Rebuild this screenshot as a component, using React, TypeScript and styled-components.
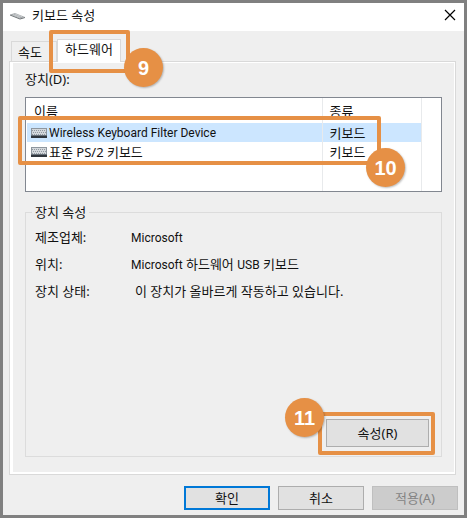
import React, { useState } from "react";
import styled, { createGlobalStyle, css } from "styled-components";

const ACCENT = "#e69045";

const GlobalStyle = createGlobalStyle`
  * { box-sizing: border-box; }
  body {
    margin: 0;
    color: #111;
    background: #efefef;
    font-family: "Noto Sans", "Noto Sans CJK KR", sans-serif;
    font-size: 13px;
    line-height: 18px;
  }
  button { font: inherit; color: inherit; }
`;

const Dialog = styled.main`
  display: flex;
  flex-direction: column;
  min-height: 100vh;
  border: 3px solid #808080;
  background: #efefef;
`;

const TitleBar = styled.header`
  display: flex;
  align-items: center;
  gap: 6px;
  height: 28px;
  padding: 0 8px 4px 7px;
  background: #fff;
`;

const Title = styled.h1`
  flex: 1;
  margin: 0;
  font-size: 13px;
  font-weight: 400;
`;

const CloseButton = styled.button`
  display: flex;
  padding: 0;
  border: 0;
  background: none;
`;

const TabBar = styled.div`
  display: flex;
  align-items: flex-end;
  margin-top: 8px;
  padding: 0 8px;
`;

const Anchor = styled.div`
  position: relative;
  display: flex;
`;

const Tab = styled.button<{ $active?: boolean }>`
  width: ${(p) => (p.$active ? 64 : 46)}px;
  height: ${(p) => (p.$active ? 23 : 20)}px;
  margin-bottom: ${(p) => (p.$active ? -1 : 0)}px;
  padding: 0 8px 0 6px;
  border: 1px solid #d9d9d9;
  border-bottom: 0;
  background: ${(p) => (p.$active ? "#fff" : "#efefef")};
  text-align: left;
  white-space: nowrap;
  ${(p) =>
    p.$active &&
    css`
      position: relative;
      padding: 0 0 4px 7px;
    `}
`;

const Panel = styled.section`
  display: flex;
  flex: 1;
  flex-direction: column;
  margin: 0 8px 0 6px;
  padding: 8px 13px 16px 12px;
  border: 1px solid #d9d9d9;
  box-shadow: inset 3px 0 #fff, inset -1px 0 #fff, inset 0 1px #fff, inset 0 -2px #fff;
`;

const ListLabel = styled.span`
  padding-bottom: 9px;
  margin-left: 3px;
`;

const ListBox = styled.div`
  position: relative;
  margin-left: 3px;
  padding-left: 1px;
  border: 1px solid #828790;
  background: #fff;
`;

const DeviceTable = styled.table`
  width: 100%;
  border-collapse: collapse;
  table-layout: fixed;
`;

const NameCol = styled.col``;
const KindCol = styled.col`
  width: 99px;
`;
const RestCol = styled.col`
  width: 20px;
`;

const HeadCell = styled.th`
  height: 25px;
  padding: 0 7px;
  font-weight: 400;
  text-align: left;
  & + & { border-left: 1px solid #e8eaec; }
`;

const Row = styled.tr<{ $selected?: boolean }>`
  td:not(:last-child) {
    background: ${(p) => (p.$selected ? "#cce6ff" : "transparent")};
  }
`;

const Cell = styled.td`
  height: 19px;
  padding: 0 7px;
  line-height: 18px;
  & + & { border-left: 1px solid #e8eaec; }
`;

const FillCell = styled(Cell)`
  height: 30px;
`;

const Device = styled.span`
  display: flex;
  align-items: center;
  gap: 2px;
  margin-left: -3px;
  white-space: nowrap;
`;

const Latin = styled.span`
  font-family: Roboto, sans-serif;
  font-size: 12px;
`;

const Group = styled.fieldset`
  min-width: 0;
  margin: 11px 0 0 3px;
  padding: 7px 12px 9px 9px;
  border: 1px solid #dcdcdc;
`;

const Legend = styled.legend`
  margin-left: -3px;
  padding: 0 3px;
`;

const Details = styled.dl`
  display: grid;
  grid-template-columns: 96px 1fr;
  row-gap: 8px;
  align-content: start;
  min-height: 191px;
  margin: 0;
`;

const Term = styled.dt``;

const Value = styled.dd<{ $indent?: boolean }>`
  margin: 0;
  padding-left: ${(p) => (p.$indent ? 4 : 0)}px;
`;

const GroupActions = styled.div`
  display: flex;
  justify-content: flex-end;
`;

const PushButton = styled.button<{ $primary?: boolean; $size?: "large" }>`
  width: ${(p) => (p.$size === "large" ? 103 : 86)}px;
  height: ${(p) => (p.$size === "large" ? 28 : 24)}px;
  padding: 0;
  border: ${(p) => (p.$primary ? "2px solid #0078d7" : "1px solid #adadad")};
  background: #e1e1e1;
  line-height: 18px;
  &:disabled {
    border-color: #bfbfbf;
    background: #ccc;
    color: #838383;
  }
`;

const Footer = styled.footer`
  display: flex;
  justify-content: flex-end;
  gap: 8px;
  padding: 11px 6px 5px;
`;

const Highlight = styled.div<{ $inset: string }>`
  position: absolute;
  z-index: 2;
  inset: ${(p) => p.$inset};
  border: 4px solid ${ACCENT};
  border-radius: 2px;
  pointer-events: none;
`;

const Badge = styled.span<{ $at: "tab" | "list" | "button" }>`
  position: absolute;
  display: grid;
  place-items: center;
  width: 39px;
  height: 39px;
  border-radius: 50%;
  background: ${ACCENT};
  box-shadow: 1px 1px 2px rgba(0, 0, 0, 0.25);
  color: #fff;
  font: 700 20px/20px "Liberation Sans", Arial, sans-serif;
  ${(p) => p.$at === "tab" && "right: -37px; bottom: -18px;"}
  ${(p) => p.$at === "list" && "right: -28px; bottom: -26px;"}
  ${(p) => p.$at === "button" && "left: -37px; top: -18px;"}
`;

const TitleIcon = () => (
  <svg width="16" height="10" viewBox="0 0 16 10" aria-hidden="true">
    <path d="M0 4.500 5 3 15 7 10 8.500Z" fill="#a9adb0" />
    <path d="m0 4.500 10 4L15 7v1l-5 1.500L0 5.500Z" fill="#6d7275" />
    <path d="m3 4.700 7 2.700M5 4l7 2.700" stroke="#d5d8da" strokeWidth=".7" />
  </svg>
);

const CloseIcon = () => (
  <svg width="12" height="12" viewBox="0 0 12 12" aria-hidden="true">
    <path d="m1 1 10 10M11 1 1 11" stroke="#000" strokeWidth="1.2" />
  </svg>
);

const KeyboardIcon = () => (
  <svg width="16" height="10" viewBox="0 0 16 10" aria-hidden="true">
    <path d="M0 0h16v10H0Z" fill="#8e969e" />
    <path d="M1 1h14v6H1Z" fill="#d4d8dc" />
    <path
      d="M1 2.500h14M2 4.500h13M1 6.500h14"
      stroke="#9299a1"
      strokeWidth="1"
      strokeDasharray="1 1"
    />
    <path d="M0 8h16v2H0Z" fill="#30363d" />
    <path d="M0 7h16v1H0Z" fill="#68717a" />
  </svg>
);

const devices = [
  { id: "wireless", name: <Latin>Wireless Keyboard Filter Device</Latin>, kind: "키보드" },
  { id: "ps2", name: "표준 PS/2 키보드", kind: "키보드" },
];

export default function App() {
  const [selected, setSelected] = useState("wireless");
  return (
    <>
      <GlobalStyle />
      <Dialog>
        <TitleBar>
          <TitleIcon />
          <Title>키보드 속성</Title>
          <CloseButton aria-label="닫기">
            <CloseIcon />
          </CloseButton>
        </TitleBar>

        <TabBar role="tablist">
          <Tab role="tab" aria-selected={false}>속도</Tab>
          <Anchor>
            <Tab role="tab" aria-selected $active>하드웨어</Tab>
            <Highlight $inset="-9px -9px -12px -8px">
              <Badge $at="tab">9</Badge>
            </Highlight>
          </Anchor>
        </TabBar>

        <Panel role="tabpanel">
          <ListLabel id="devices-label">장치(D):</ListLabel>
          <ListBox>
            <DeviceTable aria-labelledby="devices-label">
              <colgroup>
                <NameCol />
                <KindCol />
                <RestCol />
              </colgroup>
              <thead>
                <tr>
                  <HeadCell scope="col">이름</HeadCell>
                  <HeadCell scope="col">종류</HeadCell>
                  <HeadCell />
                </tr>
              </thead>
              <tbody>
                {devices.map((d) => (
                  <Row key={d.id} $selected={d.id === selected} onClick={() => setSelected(d.id)}>
                    <Cell>
                      <Device>
                        <KeyboardIcon />
                        {d.name}
                      </Device>
                    </Cell>
                    <Cell>{d.kind}</Cell>
                    <Cell />
                  </Row>
                ))}
                <tr>
                  <FillCell />
                  <FillCell />
                  <FillCell />
                </tr>
              </tbody>
            </DeviceTable>
            <Highlight $inset="18px 60px 26px -8px">
              <Badge $at="list">10</Badge>
            </Highlight>
          </ListBox>

          <Group>
            <Legend>장치 속성</Legend>
            <Details>
              <Term>제조업체:</Term>
              <Value>
                <Latin>Microsoft</Latin>
              </Value>
              <Term>위치:</Term>
              <Value>
                <Latin>Microsoft</Latin> 하드웨어 <Latin>USB</Latin> 키보드
              </Value>
              <Term>장치 상태:</Term>
              <Value $indent>이 장치가 올바르게 작동하고 있습니다.</Value>
            </Details>
            <GroupActions>
              <Anchor>
                <PushButton $size="large">속성(R)</PushButton>
                <Highlight $inset="-7px -6px -8px -8px">
                  <Badge $at="button">11</Badge>
                </Highlight>
              </Anchor>
            </GroupActions>
          </Group>
        </Panel>

        <Footer>
          <PushButton $primary>확인</PushButton>
          <PushButton>취소</PushButton>
          <PushButton disabled>적용(A)</PushButton>
        </Footer>
      </Dialog>
    </>
  );
}
